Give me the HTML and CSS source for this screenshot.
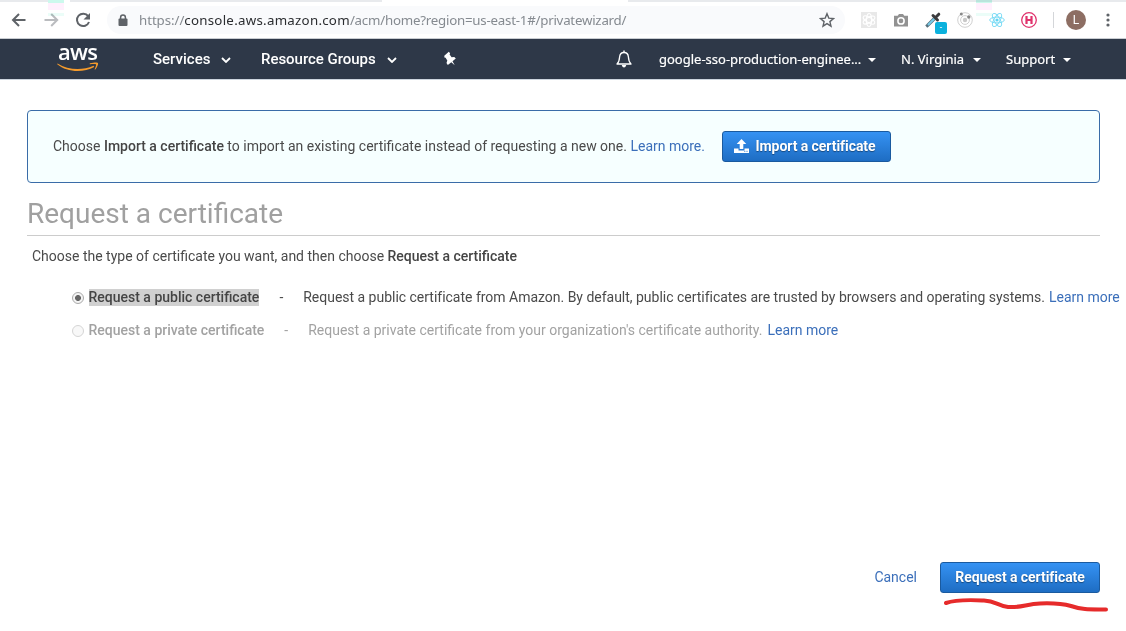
FILE: index.html
```html
<!DOCTYPE html>
<html lang="en">
<head>
<meta charset="utf-8">
<title>AWS Certificate Manager</title>
<link rel="stylesheet" href="styles.css">
</head>
<body>
<header class="toolbar">
  <svg class="nav-icon" viewBox="0 0 20 20"><path d="M16.500 10H4.500M10 4l-6 6 6 6" fill="none" stroke="#5f6368" stroke-width="2"/></svg>
  <svg class="nav-icon forward" viewBox="0 0 20 20"><path d="M3.500 10H16M10.200 4l6 6-6 6" fill="none" stroke="#babcbf" stroke-width="2"/></svg>
  <svg class="nav-icon reload" viewBox="0 0 20 20"><path d="M15.200 6.200A6.200 6.200 0 1 0 16 12" fill="none" stroke="#5f6368" stroke-width="2"/><path d="M17 3v6.500h-6.500z" fill="#5f6368"/></svg>
  <div class="address">
    <svg class="lock" viewBox="0 0 10 13"><path d="M2.600 5V3.400a2.400 2.400 0 0 1 4.800 0V5" fill="none" stroke="#5f6368" stroke-width="1.500"/><rect x=".5" y="4.600" width="9" height="7.400" rx="1" fill="#5f6368"/></svg>
    <span class="url"><span class="scheme">https://</span><span class="host">console.aws.amazon.com</span>/acm/home?region=us-east-1#/privatewizard/</span>
    <svg class="star" viewBox="0 0 16 16"><path d="M8 1.700l1.800 4.400 4.700.4-3.600 3.100 1.100 4.600L8 11.700l-4 2.500 1.100-4.600L1.500 6.500l4.700-.4z" fill="none" stroke="#5f6368" stroke-width="1.400"/></svg>
  </div>
  <div class="extensions">
    <svg viewBox="0 0 16 16"><rect width="16" height="16" fill="#e8e8e8"/><g fill="none" stroke="#fff" stroke-width="1.100"><ellipse cx="8" cy="8" rx="2.600" ry="6.500"/><ellipse cx="8" cy="8" rx="2.600" ry="6.500" transform="rotate(60 8 8)"/><ellipse cx="8" cy="8" rx="2.600" ry="6.500" transform="rotate(120 8 8)"/></g></svg>
    <svg viewBox="0 0 16 16"><path d="M1 3.800h3.700L6 2h4l1.300 1.800H15V14.500H1z" fill="#929292"/><circle cx="8" cy="8.900" r="3.900" fill="#fff"/><circle cx="8" cy="8.900" r="2.300" fill="#929292"/></svg>
    <div class="picker">
      <svg viewBox="0 0 16 16"><path d="M9.500 6.500L2.500 13.500l-1.300 1" fill="none" stroke="#55707d" stroke-width="3.200"/><path d="M9.500 6.500L3 13" stroke="#79cbe8" stroke-width="1.900"/><path d="M8 3.500l4.500 4.500M10.800 5.200l3-3" stroke="#3b3b3d" stroke-width="3" stroke-linecap="round"/></svg>
      <span class="badge">-</span>
    </div>
    <svg viewBox="0 0 16 16"><g fill="none" stroke="#d0d0d0"><circle cx="8" cy="8" r="7.300"/><circle cx="8" cy="8" r="4.400"/></g><circle cx="8" cy="8" r="2.200" fill="#c9c9c9"/><circle cx="4.300" cy="1.900" r="1.500" fill="#888"/><circle cx="11.800" cy="5" r="1.700" fill="#888"/></svg>
    <svg viewBox="0 0 16 16"><g fill="none" stroke="#7edcf5" stroke-width="1"><ellipse cx="8" cy="8" rx="7.300" ry="2.900"/><ellipse cx="8" cy="8" rx="7.300" ry="2.900" transform="rotate(60 8 8)"/><ellipse cx="8" cy="8" rx="7.300" ry="2.900" transform="rotate(120 8 8)"/></g><circle cx="8" cy="8" r="1.600" fill="#61d4f2"/></svg>
    <svg viewBox="0 0 16 16"><circle cx="8" cy="8" r="7.300" fill="none" stroke="#e0326c" stroke-width="1.300"/><path d="M5.500 4v8M10.500 4v8M5 8h6" stroke="#e0326c" stroke-width="2.200"/></svg>
  </div>
  <span class="divider"></span>
  <span class="avatar">L</span>
  <svg class="dots" viewBox="0 0 4 16"><g fill="#5f6368"><circle cx="2" cy="3" r="1.600"/><circle cx="2" cy="8" r="1.600"/><circle cx="2" cy="13" r="1.600"/></g></svg>
  <i class="glint"></i><i class="glint glint-right"></i>
</header>
<nav class="console-nav">
  <div class="logo">
    <span class="logo-text">aws</span>
    <svg class="smile" viewBox="0 0 42 10"><path d="M.5 1.500C11 8 25 8.700 36.500 3.800l.8 1.100C26 11 10 10.300.2 2.200z" fill="#f59b2c"/><path d="M33 1.200C37 .2 40.500.1 41 1c.5 1.100-.8 4.300-2.700 6.400-.5.300-.9.200-.6-.5.8-1.800 1.700-3.800 1.400-4.500-.4-.5-3.600-.4-5.700-.2-.8 0-.9-.5-.4-1z" fill="#f59b2c"/></svg>
  </div>
  <span class="menu services">Services</span>
  <svg class="chevron" viewBox="0 0 10 6"><path d="M1 1l4 4 4-4" fill="none" stroke="#fff" stroke-width="1.800"/></svg>
  <span class="menu groups">Resource Groups</span>
  <svg class="chevron" viewBox="0 0 10 6"><path d="M1 1l4 4 4-4" fill="none" stroke="#fff" stroke-width="1.800"/></svg>
  <svg class="pin" viewBox="0 0 14 16"><path d="M1.300 4.700L5.800.8l1.300 1.500-.5 1.300 2 2.600 2.700-.3 1.500 1.700-3.300 2.700 2.200 3.900-3.400-3L4.800 14l-1.300-1.900.8-2.600-1.700-2.800-1.200-.3z" fill="#fff"/></svg>
  <svg class="bell" viewBox="0 0 16 18"><path d="M1 14c2-1.800 2.400-3.300 2.600-7C3.800 4.200 5.300 2.500 8 2.500s4.200 1.700 4.400 4.500c.2 3.700.6 5.200 2.600 7z" fill="none" stroke="#fff" stroke-width="1.300" stroke-linejoin="round"/><path d="M5.700 15h4.600Q9.500 17.500 8 17.500T5.700 15M7.300.5h1.400v2H7.300z" fill="#fff"/></svg>
  <span class="side account">google-sso-production-enginee...</span>
  <i class="caret"></i>
  <span class="side region">N. Virginia</span>
  <i class="caret"></i>
  <span class="side support">Support</span>
  <i class="caret"></i>
</nav>
<main class="page">
  <section class="notice">
    <p class="notice-text">Choose <b>Import a certificate</b> to import an existing certificate instead of requesting a new one. <a>Learn more.</a></p>
    <button class="button import">
      <svg class="upload" viewBox="0 0 15 15"><path d="M7.500 0l4.800 5H9.300v5H5.700V5h-3z" fill="#fff"/><path d="M0 9.500h4.500v2h6v-2H15V14H0z" fill="#fff"/><path d="M10.300 12.300h1M12.500 12.300h1" stroke="#2475cc"/></svg>
      <span>Import a certificate</span>
    </button>
  </section>
  <h1 class="title">Request a certificate</h1>
  <p class="intro">Choose the type of certificate you want, and then choose <b>Request a certificate</b></p>
  <div class="options">
    <label class="option"><i class="radio checked"></i><b class="selected">Request a public certificate</b><span class="dash">-</span><span class="desc public">Request a public certificate from Amazon. By default, public certificates are trusted by browsers and operating systems.</span><a>Learn more</a></label>
    <label class="option disabled"><i class="radio"></i><b>Request a private certificate</b><span class="dash">-</span><span class="desc">Request a private certificate from your organization's certificate authority.</span><a>Learn more</a></label>
  </div>
  <footer class="actions">
    <a class="cancel">Cancel</a>
    <div class="submit">
      <button class="button request">Request a certificate</button>
      <svg class="underline" viewBox="0 0 168 18"><path d="M4 7C15 3 31 4 42 4.500 54 5 56 10 66 11 78 12 85 8 98 7.500c13-.5 22 0 31 2.500 12 4 18 3.500 35 3.500" fill="none" stroke="#e62b2b" stroke-width="4" stroke-linecap="round"/></svg>
    </div>
  </footer>
</main>
</body>
</html>
```
FILE: styles.css
```css
* { box-sizing: border-box; }
body {
  margin: 0;
  width: 1126px;
  height: 631px;
  overflow: hidden;
  background: #fff;
  color: #4a4a4a;
  font-family: Roboto, sans-serif;
  font-size: 14px;
  line-height: 18px;
}
p, h1 { margin: 0; }
a { color: #3b6fba; }
b { font-weight: 500; color: #444; }
svg { display: block; flex: none; }
span, a, b { white-space: nowrap; }

.toolbar {
  position: relative;
  display: flex;
  align-items: center;
  height: 39px;
  padding: 2px 0 0 9px;
  border-bottom: 1px solid #c9cdd2;
  background: linear-gradient(90deg, #e8eaed 0 48px, #fff 48px 70px, #e8eaed 70px 382px, #fff 382px 628px, #e8eaed 628px) 0 0 / 100% 2px no-repeat #fff;
}
.nav-icon { width: 20px; height: 20px; }
.forward { margin-left: 12px; }
.reload { margin-left: 12px; }
.address {
  display: flex;
  align-items: center;
  width: 738px;
  height: 28px;
  margin-left: 14px;
  padding-left: 11px;
  border-radius: 14px;
  background: #f9fafc;
}
.lock { width: 10px; height: 13px; }
.url {
  width: 680px;
  margin-left: 11px;
  color: #858a90;
  font: 13.3px/20px "Noto Sans", sans-serif;
  letter-spacing: -0.23px;
}
.scheme { letter-spacing: -0.07px; }
.host { color: #2b2d30; letter-spacing: 0.27px; }
.star { width: 16px; height: 16px; }
.extensions { display: flex; gap: 16px; margin-left: 16px; }
.extensions svg { width: 16px; height: 16px; }
.picker { position: relative; width: 16px; }
.badge {
  position: absolute;
  left: 10px;
  top: 10px;
  width: 12px;
  height: 12px;
  border-radius: 2px;
  background: #0bb1dd;
  color: #fff;
  font-size: 9px;
  line-height: 11px;
  text-align: center;
}
.divider { width: 1px; height: 16px; margin-left: 16px; background: #d4d6d9; }
.avatar {
  width: 20px;
  height: 20px;
  margin-left: 12px;
  border-radius: 50%;
  background: #8d6e63;
  color: #fff;
  font-size: 12px;
  line-height: 20px;
  text-align: center;
}
.dots { width: 4px; height: 16px; margin-left: 20px; }
.glint {
  position: absolute;
  left: 48px;
  top: 0;
  width: 16px;
  height: 16px;
  background: linear-gradient(#ccf9ed 0 3px, #fff0fd 3px 10px, transparent 10px 13px, #ebfdf8 13px);
  mix-blend-mode: multiply;
}
.glint-right { left: 976px; }

.console-nav {
  display: flex;
  align-items: center;
  height: 41px;
  padding-left: 57px;
  border-bottom: 1px solid #ccd4dd;
  background: #2e3848;
  color: #fff;
}
.logo { width: 42px; height: 30px; }
.logo-text {
  display: block;
  height: 18px;
  padding-left: 1px;
  font: 600 22px/14px "Open Sans", sans-serif;
  letter-spacing: -0.7px;
}
.smile { width: 42px; height: 10px; }
.menu { font-size: 15px; font-weight: 500; }
.services { width: 68px; margin-left: 54px; }
.chevron { width: 10px; height: 6px; margin-top: 2px; }
.groups { width: 126px; margin-left: 30px; letter-spacing: -0.03px; }
.pin { width: 14px; height: 16px; margin-left: 46px; }
.bell { width: 16px; height: 18px; margin-left: 159px; }
.side { font: 13px/18px "Noto Sans", sans-serif; -webkit-text-stroke: 0.2px #fff; }
.account { width: 209px; margin-left: 27px; letter-spacing: -0.15px; }
.region { width: 72px; margin-left: 25px; }
.support { width: 57px; margin-left: 25px; }
.account { letter-spacing: 0; }
.caret {
  border: 4px solid transparent;
  border-top-color: #fff;
  border-bottom: 0;
  margin-top: 1px;
}

.page { padding: 30px 26px 0 27px; }
.notice {
  display: flex;
  align-items: center;
  height: 73px;
  padding-left: 25px;
  border: 1px solid #3a6ca8;
  border-radius: 4px;
  background: #f6ffff;
}
.notice-text { width: 669px; padding-bottom: 2px; white-space: nowrap; }
.button {
  display: flex;
  align-items: center;
  justify-content: center;
  height: 31px;
  padding: 0 0 1px;
  border: 1px solid #1a5a9f;
  border-radius: 3px;
  background: linear-gradient(#3592f3, #1e6dc3);
  color: #fff;
  font: 700 14px/18px Roboto, sans-serif;
  letter-spacing: -0.06px;
  text-shadow: 0 1px 1px #174a80;
}
.button span { margin-top: -1px; }
.import { width: 169px; gap: 6px; padding-right: 3px; }
.upload { width: 15px; height: 15px; }
.title {
  height: 53px;
  padding-top: 14px;
  border-bottom: 1px solid #ccc;
  color: #a0a0a0;
  font-size: 28px;
  font-weight: 400;
  line-height: 34px;
}
.intro { padding: 11px 0 0 5px; }
.options { display: grid; gap: 15px; padding: 23px 0 0 45px; }
.option { display: flex; align-items: center; height: 18px; }
.radio {
  flex: none;
  width: 12px;
  height: 12px;
  margin: 1px 4.5px 0 0;
  border: 1px solid #aaa;
  border-radius: 50%;
  background: #f8f8f8;
}
.checked { background: radial-gradient(circle, #666 0 2.6px, #f4f4f4 3.3px); }
.selected { height: 17px; background: #d0d0d0; line-height: 17px; }
.dash { margin: 0 20px 0 20px; }
.public { letter-spacing: -0.015px; }
.option a { margin-left: 5px; }
.option .public + a { margin-left: 4px; }
.disabled, .disabled b { color: #a2a2a2; }
.disabled .radio { border-color: #d5d5d5; }
.actions {
  display: flex;
  justify-content: flex-end;
  align-items: flex-start;
  padding-top: 223px;
}
.cancel { margin: 6px 23px 0 0; }
.submit { position: relative; }
.request { width: 160px; }
.underline { position: absolute; left: 2px; top: 34px; width: 168px; height: 18px; }
```
